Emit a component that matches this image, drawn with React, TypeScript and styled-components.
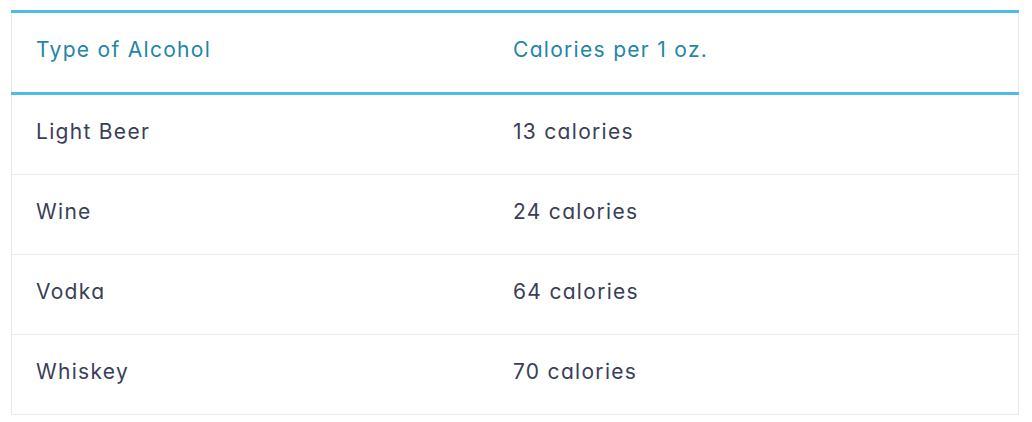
import React from "react";
import styled, { createGlobalStyle } from "styled-components";

const Global = createGlobalStyle`
  html, body { margin: 0; padding: 0; background: #ffffff; }
  body {
    font-family: "Inter", "Noto Sans", sans-serif;
    font-feature-settings: "cv11" 1, "ss03" 1;
  }
`;

const Wrap = styled.div`
  padding: 10px 13px 0 11px;
`;

const Table = styled.table`
  width: 1008px;
  border-collapse: collapse;
  table-layout: fixed;
  border-left: 1px solid #e8e8e8;
  border-right: 1px solid #e8e8e8;
`;

const HeadRow = styled.tr`
  border-top: 3px solid #4dbde8;
  border-bottom: 3px solid #4dbde8;
`;

const Th = styled.th<{ $w?: string }>`
  width: ${(p) => p.$w ?? "auto"};
  height: 73px;
  padding: 0 24px 6px;
  text-align: left;
  font-weight: 400;
  font-size: 21px;
  letter-spacing: 1.3px;
  color: #1f86a5;
  vertical-align: middle;
`;

const Row = styled.tr`
  border-bottom: 1px solid #ebebeb;
`;

const Td = styled.td`
  height: 73px;
  padding: 0 24px 6px;
  font-size: 21px;
  letter-spacing: 1.3px;
  color: #3a3e58;
  vertical-align: middle;
`;

const rows = [
  ["Light Beer", "13 calories"],
  ["Wine", "24 calories"],
  ["Vodka", "64 calories"],
  ["Whiskey", "70 calories"],
];

export default function App() {
  return (
    <>
      <Global />
      <Wrap>
        <Table>
          <thead>
            <HeadRow>
              <Th $w="429px">Type of Alcohol</Th>
              <Th>Calories per 1 oz.</Th>
            </HeadRow>
          </thead>
          <tbody>
            {rows.map(([a, b]) => (
              <Row key={a}>
                <Td>{a}</Td>
                <Td>{b}</Td>
              </Row>
            ))}
          </tbody>
        </Table>
      </Wrap>
    </>
  );
}
